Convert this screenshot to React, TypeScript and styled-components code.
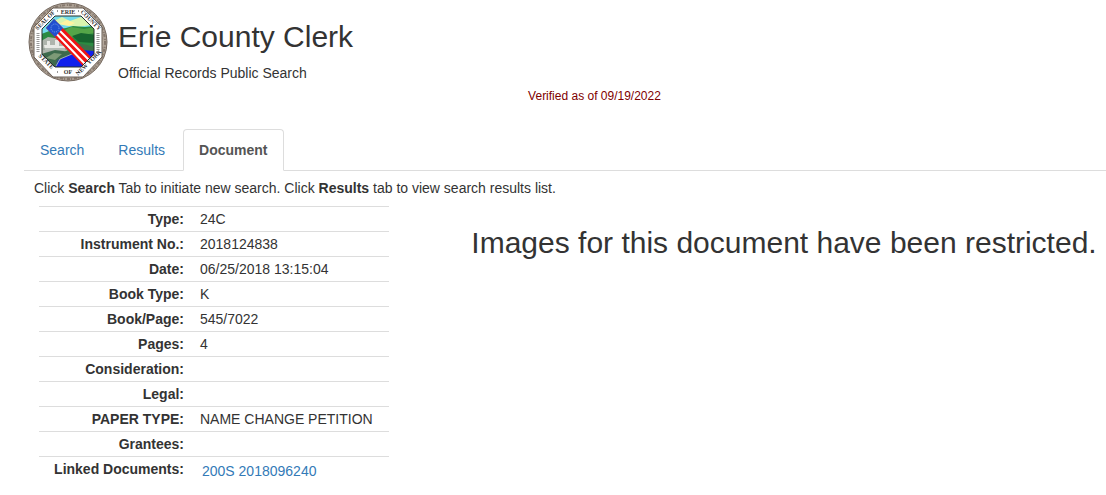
import React from "react";
import styled, { createGlobalStyle } from "styled-components";

const GlobalStyle = createGlobalStyle`
  * { box-sizing: border-box; }
  body {
    margin: 0;
    background: #fff;
    color: #333;
    font-family: "Liberation Sans", Arial, sans-serif;
    font-size: 14px;
    line-height: 20px;
  }
`;

const Page = styled.div`
  padding-left: 24px;
`;

const Header = styled.header`
  display: flex;
  gap: 10px;
  padding: 2px 4px 0;
`;

const Titles = styled.div`
  padding-top: 19px;
`;

const Title = styled.h1`
  margin: 0 0 10px;
  font-size: 30px;
  font-weight: 400;
  line-height: 32px;
`;

const Subtitle = styled.p`
  margin: 0;
`;

const Verified = styled.p`
  margin: 3px 0 23px;
  padding-left: 59px;
  text-align: center;
  font-size: 12px;
  color: #800000;
`;

const Tabs = styled.nav`
  display: flex;
  gap: 2px;
  border-bottom: 1px solid #ddd;
`;

const Tab = styled.a<{ $active?: boolean }>`
  margin-bottom: -1px;
  padding: 10px 15px;
  border: 1px solid transparent;
  border-color: ${(p) => (p.$active ? "#ddd #ddd #fff" : "transparent")};
  border-radius: 4px 4px 0 0;
  background: ${(p) => (p.$active ? "#fff" : "transparent")};
  color: ${(p) => (p.$active ? "#555" : "#337ab7")};
  font-weight: ${(p) => (p.$active ? 700 : 400)};
  text-decoration: none;
`;

const Hint = styled.p`
  margin: 7px 10px 8px;
`;

const Content = styled.main`
  display: flex;
  align-items: flex-start;
  padding-left: 15px;
`;

const Details = styled.table`
  flex: none;
  width: 350px;
  border-collapse: collapse;
  table-layout: fixed;
`;

const Label = styled.th`
  width: 153px;
  height: 25px;
  padding: 2px 8px;
  border-top: 1px solid #ddd;
  text-align: right;
  vertical-align: top;
`;

const Value = styled.td`
  padding: 2px 8px;
  border-top: 1px solid #ddd;
  vertical-align: top;
`;

const RecordLink = styled.a`
  display: block;
  padding: 2px;
  color: #337ab7;
  text-decoration: none;
`;

const Viewer = styled.section`
  flex: 1;
  padding: 20px 9px 0 82px;
  text-align: center;
`;

const Notice = styled.h2`
  margin: 0;
  font-size: 30px;
  font-weight: 400;
  line-height: 33px;
  white-space: nowrap;
`;

const SealArt = styled.svg`
  flex: none;
  width: 80px;
  height: 80px;
`;

const SealText = styled.text`
  font-family: "Liberation Serif", serif;
  font-size: 6px;
  font-weight: 700;
  fill: #333;
  text-anchor: middle;
`;

const inner = "27,14 53,14 66,27 66,52 53,65 27,65 14,52 14,27";

const sealWords = [
  { id: "seal-upper-left", d: "M9 29L28 10", text: "SEAL OF" },
  { id: "seal-top", d: "M28 12H52", text: "ERIE" },
  { id: "seal-upper-right", d: "M51 9L72 30", text: "COUNTY" },
  { id: "seal-lower-left", d: "M7 51L27 71", text: "STATE" },
  { id: "seal-bottom", d: "M28 72H52", text: "OF" },
  { id: "seal-lower-right", d: "M48 76L76 48", text: "NEW YORK" },
];

function Seal() {
  return (
    <SealArt viewBox="0 0 80 80" role="img" aria-label="Seal of Erie County, State of New York">
      <defs>
        <clipPath id="scene">
          <polygon points={inner} />
        </clipPath>
        {sealWords.map((w) => (
          <path key={w.id} id={w.id} d={w.d} />
        ))}
      </defs>
      <circle cx="40" cy="40" r="39" fill="#ab9f93" stroke="#74685e" />
      <circle cx="40" cy="40" r="37" fill="none" stroke="#85786d" strokeWidth="2" strokeDasharray="3 2 1 1" />
      <circle cx="40" cy="40" r="35" fill="none" stroke="#c4b8aa" strokeDasharray="5 2" />
      <polygon points="25,6 55,6 74,25 74,55 55,75 25,75 6,55 6,25" fill="#fff" stroke="#6b6057" />
      <g clipPath="url(#scene)">
        <rect x="13" y="13" width="54" height="53" fill="#73dceb" />
        <path d="M24 20l10-5 8 4 11-4 10 8-13 2-15-2z" fill="#d9f5ae" />
        <path d="M31 22l8-4 8 3-6 3z" fill="#fff3a0" />
        <path d="M13 32l11-4 14-2 7-2 12 1 10-1v42H13z" fill="#2b8b42" />
        <path d="M35 29l8-4 7 1 6 1 11-2v6l-14 2-10 3z" fill="#55a548" />
        <path d="M44 34l9-3 14 2v8l-16-1z" fill="#17652f" />
        <path d="M13 39l7-4 14 2 9 9-8 5-22 3z" fill="#aeb5ad" />
        <path d="M16 43h3v-4h3v4h5v-5h4v6h6v4H17z" fill="#e8eae6" />
        <path d="M15 47h24" stroke="#829087" fill="none" />
        <path d="M13 52l14-4 16 2 3 4-16 14H13z" fill="#3d6a4d" />
        <path d="M18 56l8-5 8 1-7 6z" fill="#7d9a77" />
        <path d="M27 66l3-8 14-6 8-6 15-1v22z" fill="#1120ec" />
        <path d="M28 64l4-7 12-5" stroke="#a3b3ad" fill="none" />
        <path d="M46 40l21 5v4L53 48z" fill="#3e7148" />
        <path d="M18 26L26 17 64 56 56 65z" fill="#f01414" />
        <path d="M22 25L57 62M25 22L61 58" stroke="#fff" strokeWidth="2" />
        <path d="M18 26L26 17 35 26 27 35z" fill="#2050cf" />
        <circle cx="27" cy="26" r="4" fill="none" stroke="#7ca0ef" strokeDasharray="1 1" />
      </g>
      <polygon points={inner} fill="none" stroke="#29312b" />
      <path d="M10 31v19M70 31v19" stroke="#999" strokeWidth="3" strokeDasharray="1 1" />
      <path d="M29 9h1M50 9h1M29 70h1M50 70h1" stroke="#333" />
      {sealWords.map((w) => (
        <SealText key={w.id}>
          <textPath href={`#${w.id}`} startOffset="50%">{w.text}</textPath>
        </SealText>
      ))}
    </SealArt>
  );
}

const records: { label: string; value?: string; href?: string }[] = [
  { label: "Type", value: "24C" },
  { label: "Instrument No.", value: "2018124838" },
  { label: "Date", value: "06/25/2018 13:15:04" },
  { label: "Book Type", value: "K" },
  { label: "Book/Page", value: "545/7022" },
  { label: "Pages", value: "4" },
  { label: "Consideration" },
  { label: "Legal" },
  { label: "PAPER TYPE", value: "NAME CHANGE PETITION" },
  { label: "Grantees" },
  { label: "Linked Documents", value: "200S 2018096240", href: "#2018096240" },
];

export default function App() {
  return (
    <Page>
      <GlobalStyle />
      <Header>
        <Seal />
        <Titles>
          <Title>Erie County Clerk</Title>
          <Subtitle>Official Records Public Search</Subtitle>
        </Titles>
      </Header>
      <Verified>Verified as of 09/19/2022</Verified>
      <Tabs>
        <Tab href="#search">Search</Tab>
        <Tab href="#results">Results</Tab>
        <Tab href="#document" $active aria-current="page">Document</Tab>
      </Tabs>
      <Hint>
        Click <b>Search</b> Tab to initiate new search. Click <b>Results</b> tab to view search results list.
      </Hint>
      <Content>
        <Details>
          <tbody>
            {records.map((r) => (
              <tr key={r.label}>
                <Label scope="row">{r.label}:</Label>
                <Value>{r.href ? <RecordLink href={r.href}>{r.value}</RecordLink> : r.value}</Value>
              </tr>
            ))}
          </tbody>
        </Details>
        <Viewer>
          <Notice>Images for this document have been restricted.</Notice>
        </Viewer>
      </Content>
    </Page>
  );
}
